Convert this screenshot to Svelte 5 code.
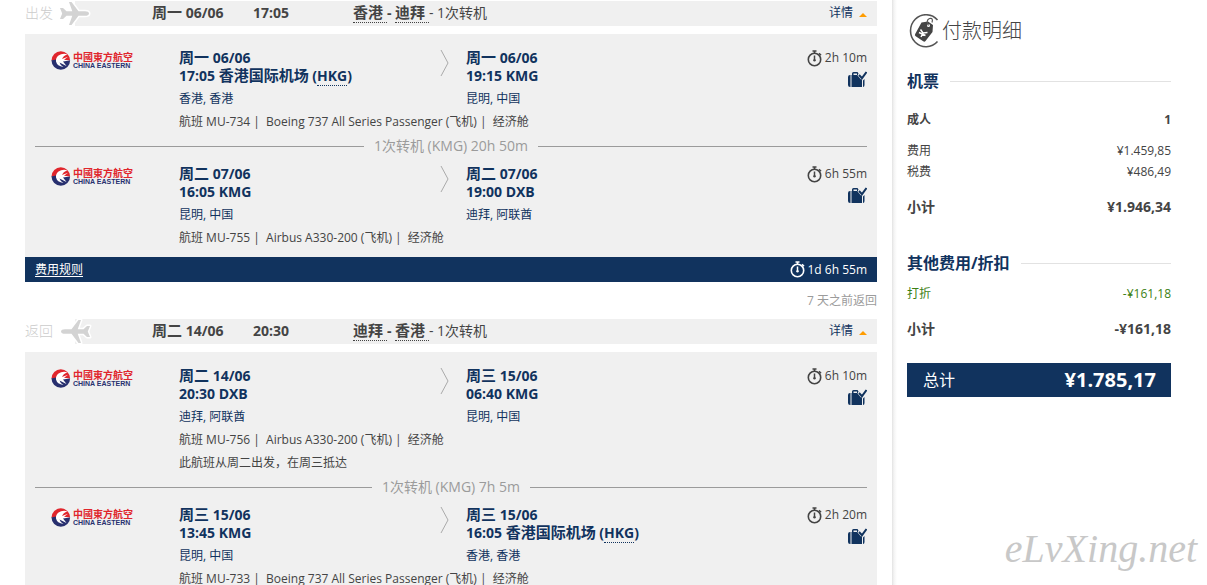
<script lang="ts">
	interface Stop {
		weekday: string;
		date: string;
		time: string;
		airport?: string;
		code: string;
		city: string;
	}

	interface Leg {
		from: Stop;
		to: Stop;
		duration: string;
		flight: string;
		aircraft: string;
		note?: string;
		layover?: string;
	}

	interface Trip {
		id: string;
		label: string;
		inbound?: boolean;
		weekday: string;
		date: string;
		time: string;
		origin: string;
		destination: string;
		legs: Leg[];
		total?: string;
	}

	const hkg = { airport: '香港国际机场', code: 'HKG', city: '香港, 香港' };
	const kmg = { code: 'KMG', city: '昆明, 中国' };
	const dxb = { code: 'DXB', city: '迪拜, 阿联酋' };

	const trips: Trip[] = [
		{
			id: 'outbound',
			label: '出发',
			weekday: '周一',
			date: '06/06',
			time: '17:05',
			origin: '香港',
			destination: '迪拜',
			total: '1d 6h 55m',
			legs: [
				{
					from: { weekday: '周一', date: '06/06', time: '17:05', ...hkg },
					to: { weekday: '周一', date: '06/06', time: '19:15', ...kmg },
					duration: '2h 10m',
					flight: 'MU-734',
					aircraft: 'Boeing 737 All Series Passenger',
					layover: '(KMG) 20h 50m'
				},
				{
					from: { weekday: '周二', date: '07/06', time: '16:05', ...kmg },
					to: { weekday: '周二', date: '07/06', time: '19:00', ...dxb },
					duration: '6h 55m',
					flight: 'MU-755',
					aircraft: 'Airbus A330-200'
				}
			]
		},
		{
			id: 'inbound',
			label: '返回',
			inbound: true,
			weekday: '周二',
			date: '14/06',
			time: '20:30',
			origin: '迪拜',
			destination: '香港',
			legs: [
				{
					from: { weekday: '周二', date: '14/06', time: '20:30', ...dxb },
					to: { weekday: '周三', date: '15/06', time: '06:40', ...kmg },
					duration: '6h 10m',
					flight: 'MU-756',
					aircraft: 'Airbus A330-200',
					note: '此航班从周二出发，在周三抵达',
					layover: '(KMG) 7h 5m'
				},
				{
					from: { weekday: '周三', date: '15/06', time: '13:45', ...kmg },
					to: { weekday: '周三', date: '15/06', time: '16:05', ...hkg },
					duration: '2h 20m',
					flight: 'MU-733',
					aircraft: 'Boeing 737 All Series Passenger'
				}
			]
		}
	];
</script>

{#snippet clock()}
	<svg class="clock" viewBox="0 0 15 17" width="15" height="17" aria-hidden="true">
		<circle cx="7.5" cy="9.5" r="6.2" fill="none" stroke="currentColor" stroke-width="1.6" />
		<path d="M5.5 1h4M7.5 1v2.5M12 3.2l2 2" stroke="currentColor" stroke-width="1.6" />
		<path d="M7.5 5.5v5" stroke="currentColor" stroke-width="1.5" />
		<circle cx="7.5" cy="10.3" r="1.2" fill="currentColor" />
	</svg>
{/snippet}

{#snippet logo()}
	<div class="logo">
		<svg viewBox="0 0 20 19" width="20" height="19" aria-hidden="true">
			<path d="M.5 9.500a9.300 9.300 0 0 1 18.600 0z" fill="#e0262d" />
			<path d="M.5 9.500a9.300 9.300 0 0 0 18.600 0z" fill="#28306f" />
			<path d="M.5 9.500 5 8.500v5q-3-1-4.500-4z" fill="#28306f" />
			<path
				d="M16.500 3.200Q11 2 7.500 4.500 4.500 7 5 10.500q1 4.500 7.500 5.500-3.500-2-4-4.500l7 3.500-3.500-4.500 6.500-1-5.500-.700 4-3-6 2.200q1-3 5.500-4.800z"
				fill="#fff"
			/>
		</svg>
		<div class="logo-text">
			<span class="logo-zh">中國東方航空</span>
			<span class="logo-en">CHINA EASTERN</span>
		</div>
	</div>
{/snippet}

{#snippet stop(s: Stop)}
	<div class="stop">
		<strong><span class="zh">{s.weekday}</span> {s.date}</strong>
		<strong>
			{s.time}
			{#if s.airport}
				<span class="zh">{s.airport}</span> (<abbr title={s.airport}>{s.code}</abbr>)
			{:else}
				{s.code}
			{/if}
		</strong>
		<span class="city">{s.city}</span>
	</div>
{/snippet}

<div class="page">
	<main>
		{#each trips as trip (trip.id)}
			<section>
				<header class="trip-head">
					<span class="direction">{trip.label}</span>
					<svg
						class="plane"
						class:flipped={trip.inbound}
						viewBox="0 0 32 25"
						width="32"
						height="25"
						aria-hidden="true"
					>
						<path
							d="M30 12.500c0-1.400-1.800-2.300-4-2.300h-6.500L12.500 1H10l3.300 9.200H7.500L4 7H1l2.200 5.500L1 18h3l3.500-3.200h5.800L10 24h2.500l7-9.200H26c2.200 0 4-.9 4-2.300z"
							fill="#d3d3d3"
							stroke="#fff"
							stroke-width="3"
							stroke-linejoin="round"
							paint-order="stroke"
						/>
					</svg>
					<div class="strip">
						<strong class="day"><span class="zh">{trip.weekday}</span> {trip.date}</strong>
						<strong class="time">{trip.time}</strong>
						<span class="route">
							<strong><abbr class="zh" title={trip.origin}>{trip.origin}&nbsp;</abbr>-</strong>
							<strong><abbr class="zh" title={trip.destination}>{trip.destination}&nbsp;</abbr></strong>-
							1次转机
						</span>
						<button type="button" class="details">
							详情 <span class="caret"></span>
						</button>
					</div>
				</header>

				<div class="panel">
					{#each trip.legs as leg}
						<article class="leg">
							{@render logo()}
							<div class="from">
								{@render stop(leg.from)}
								<svg class="chevron" viewBox="0 0 9 28" width="9" height="28" aria-hidden="true">
									<path d="M1 1l7 13-7 13" fill="none" stroke="#aaa" />
								</svg>
							</div>
							{@render stop(leg.to)}
							<div class="side">
								<span class="duration">{@render clock()}{leg.duration}</span>
								<svg viewBox="0 0 19 17" width="19" height="17" role="img" aria-label="行李">
									<path
										d="M2.500 4v12H2q-2 0-2-2V6q0-2 2-2zM3.500 4H4V2.500Q4 1 5.500 1h4l1 1.500-1 2 3.500 4 1-.5v8H3.500zM5.500 2.500V4h3.500V2.500zM15 9.500 16.500 8v6q0 2-1.500 2z"
										fill="#11335e"
										fill-rule="evenodd"
									/>
									<path d="M11 4l3 3.200L18.500 1" fill="none" stroke="#11335e" stroke-width="2" />
								</svg>
							</div>
							<div class="info">
								<p>航班 {leg.flight} |&nbsp; {leg.aircraft} (飞机) |&nbsp; 经济舱</p>
								{#if leg.note}
									<p>{leg.note}</p>
								{/if}
							</div>
						</article>
						{#if leg.layover}
							<div class="layover"><span>1次转机 {leg.layover}</span></div>
						{/if}
					{/each}
				</div>

				{#if trip.total}
					<div class="summary">
						<a href="#rules">费用规则</a>
						<span class="duration">{@render clock()}{trip.total}</span>
					</div>
					<p class="return-note">7 天之前返回</p>
				{/if}
			</section>
		{/each}
	</main>

	<aside>
		<h1>
			<svg viewBox="0 0 32 34" width="32" height="34" aria-hidden="true">
				<path
					d="M30.500 6A15.500 16 0 1 0 30.500 27.500"
					fill="none"
					stroke="#555"
					stroke-width="1.600"
				/>
				<path
					d="M14.500 8.500l6.500-1 5 3.500-.5 7-7 9q-1 1.200-2.300.3l-7.500-5q-1.400-1-.5-2.300z"
					fill="#444"
				/>
				<circle cx="21.500" cy="11.500" r="1.500" fill="#fff" />
				<path d="M21.500 11.500q-3-5 1-7 4-1 2.500 4" fill="none" stroke="#555" stroke-width="1.200" />
				<path
					d="M13.500 15.500l2.500 3.500 4.500-.5M16 19l-2 4M12 18.500l6.500 3"
					fill="none"
					stroke="#fff"
					stroke-width="1.500"
				/>
			</svg>
			付款明细
		</h1>

		<h2 class="fares">机票</h2>
		<dl>
			<div class="row passengers"><dt>成人</dt><dd>1</dd></div>
			<div class="row"><dt>费用</dt><dd>¥1.459,85</dd></div>
			<div class="row"><dt>税费</dt><dd>¥486,49</dd></div>
			<div class="row subtotal"><dt>小计</dt><dd>¥1.946,34</dd></div>
		</dl>

		<h2 class="extras">其他费用/折扣</h2>
		<dl>
			<div class="row discount"><dt>打折</dt><dd>-¥161,18</dd></div>
			<div class="row subtotal"><dt>小计</dt><dd>-¥161,18</dd></div>
		</dl>

		<div class="total"><span>总计</span><strong>¥1.785,17</strong></div>
	</aside>

	<span class="watermark">eLvXing.net</span>
</div>

<style>
	:global(body) {
		background: #fff;
	}

	.page {
		position: relative;
		display: flex;
		height: 100vh;
		overflow: hidden;
		font-family: 'Open Sans', 'Noto Sans CJK SC', sans-serif;
		font-size: 12px;
		line-height: 18px;
		color: #444;
	}

	main {
		flex: 1;
		min-width: 0;
		padding: 1px 15px 0 25px;
	}

	p,
	h1,
	h2,
	dl,
	dd {
		margin: 0;
	}

	abbr {
		text-decoration: none;
		border-bottom: 1px dotted currentColor;
	}

	/* bold Chinese runs are set one step larger than the digits beside them */
	.zh {
		font-size: 15px;
		line-height: 1;
	}

	.trip-head {
		display: flex;
		height: 25px;
		align-items: center;
		margin-bottom: 8px;
		font-size: 14px;
	}

	.direction {
		width: 34px;
		padding-bottom: 2px;
		color: #ccc;
		font-weight: 300;
	}

	.plane {
		position: relative;
		overflow: visible;
	}

	.flipped {
		transform: scaleX(-1);
	}

	.strip {
		box-sizing: border-box;
		flex: 1;
		display: flex;
		align-items: center;
		height: 25px;
		margin-left: -16px;
		padding: 0 10px 2px 77px;
		background: #f0f0f0;
		white-space: nowrap;
	}

	.day {
		width: 101px;
	}

	.time {
		width: 100px;
	}

	.route {
		flex: 1;
	}

	.details {
		display: flex;
		align-items: center;
		gap: 6px;
		padding: 0;
		border: 0;
		background: none;
		font: inherit;
		font-size: 12px;
		color: #11335e;
		cursor: pointer;
	}

	.caret {
		border: 4px solid transparent;
		border-top: 0;
		border-bottom-color: #ff9c00;
		margin-top: 5px;
	}

	.panel {
		padding: 9px 10px 8px;
		background: #f0f0f0;
	}

	.leg {
		display: grid;
		grid-template-columns: 144px minmax(0, 287fr) minmax(0, 341fr) 60px;
		padding-top: 6px;
	}

	.logo {
		display: flex;
		align-items: flex-start;
		gap: 2px;
		padding: 2px 0 0 16px;
	}

	.logo-text {
		display: flex;
		flex-direction: column;
		padding-top: 1px;
		font-weight: bold;
		white-space: nowrap;
	}

	.logo-zh {
		font-size: 10px;
		line-height: 10px;
		color: #e0262d;
	}

	.logo-en {
		font-family: 'Liberation Sans', Arial, sans-serif;
		font-size: 7px;
		line-height: 7px;
		color: #28306f;
	}

	.from {
		display: flex;
		justify-content: space-between;
		padding-right: 17px;
	}

	.stop {
		color: #11335e;
		white-space: nowrap;
	}

	.stop strong {
		display: block;
		height: 18px;
		font-size: 14px;
	}

	.city {
		display: block;
		margin-top: 2px;
		line-height: 23px;
	}

	.side {
		display: flex;
		flex-direction: column;
		align-items: flex-end;
		gap: 4px;
	}

	.duration {
		display: flex;
		align-items: center;
		gap: 3px;
		white-space: nowrap;
	}

	.info {
		grid-column: 2 / -1;
		line-height: 23px;
	}

	.layover {
		display: flex;
		align-items: center;
		gap: 10px;
		height: 26px;
		font-size: 14px;
		color: #9b9b9b;
	}

	.layover::before,
	.layover::after {
		content: '';
		flex: 1;
		border-top: 1px solid #9b9b9b;
	}

	.summary {
		display: flex;
		align-items: center;
		justify-content: space-between;
		height: 25px;
		padding: 0 10px;
		background: #11335e;
		color: #fff;
	}

	.summary a {
		color: #fff;
		text-underline-offset: 2px;
	}

	.return-note {
		line-height: 37px;
		text-align: right;
		color: #9b9b9b;
	}

	aside {
		box-sizing: border-box;
		width: 315px;
		padding: 14px 36px 0 15px;
		background: linear-gradient(to right, #e2e2e2, #f4f4f4 2px, #fff 5px);
	}

	h1 {
		display: flex;
		align-items: center;
		gap: 3px;
		height: 34px;
		font-size: 20px;
		font-weight: 300;
	}

	h2 {
		display: flex;
		align-items: center;
		gap: 11px;
		font-size: 16px;
		line-height: 24px;
		color: #11335e;
	}

	h2::after {
		content: '';
		flex: 1;
		border-top: 1px solid #e2e2e2;
	}

	.fares {
		margin: 21px 0 16px;
	}

	.extras {
		margin: 34px 0 8px;
	}

	.row {
		display: flex;
		justify-content: space-between;
		line-height: 21px;
	}

	.passengers {
		margin-bottom: 10px;
		font-weight: bold;
	}

	.subtotal {
		margin-top: 15px;
		font-size: 14px;
		line-height: 20px;
		font-weight: bold;
	}

	.discount {
		color: #3c7f14;
	}

	.total {
		display: flex;
		align-items: center;
		justify-content: space-between;
		height: 34px;
		margin-top: 24px;
		padding: 0 15px 0 16px;
		background: #11335e;
		color: #fff;
		font-size: 16px;
	}

	.total strong {
		font-size: 20px;
	}

	.watermark {
		position: absolute;
		right: 10px;
		bottom: 16px;
		font-family: 'Brush Script MT', 'Liberation Serif', serif;
		font-size: 40px;
		font-style: italic;
		line-height: 40px;
		color: #c8c8c8;
	}
</style>
